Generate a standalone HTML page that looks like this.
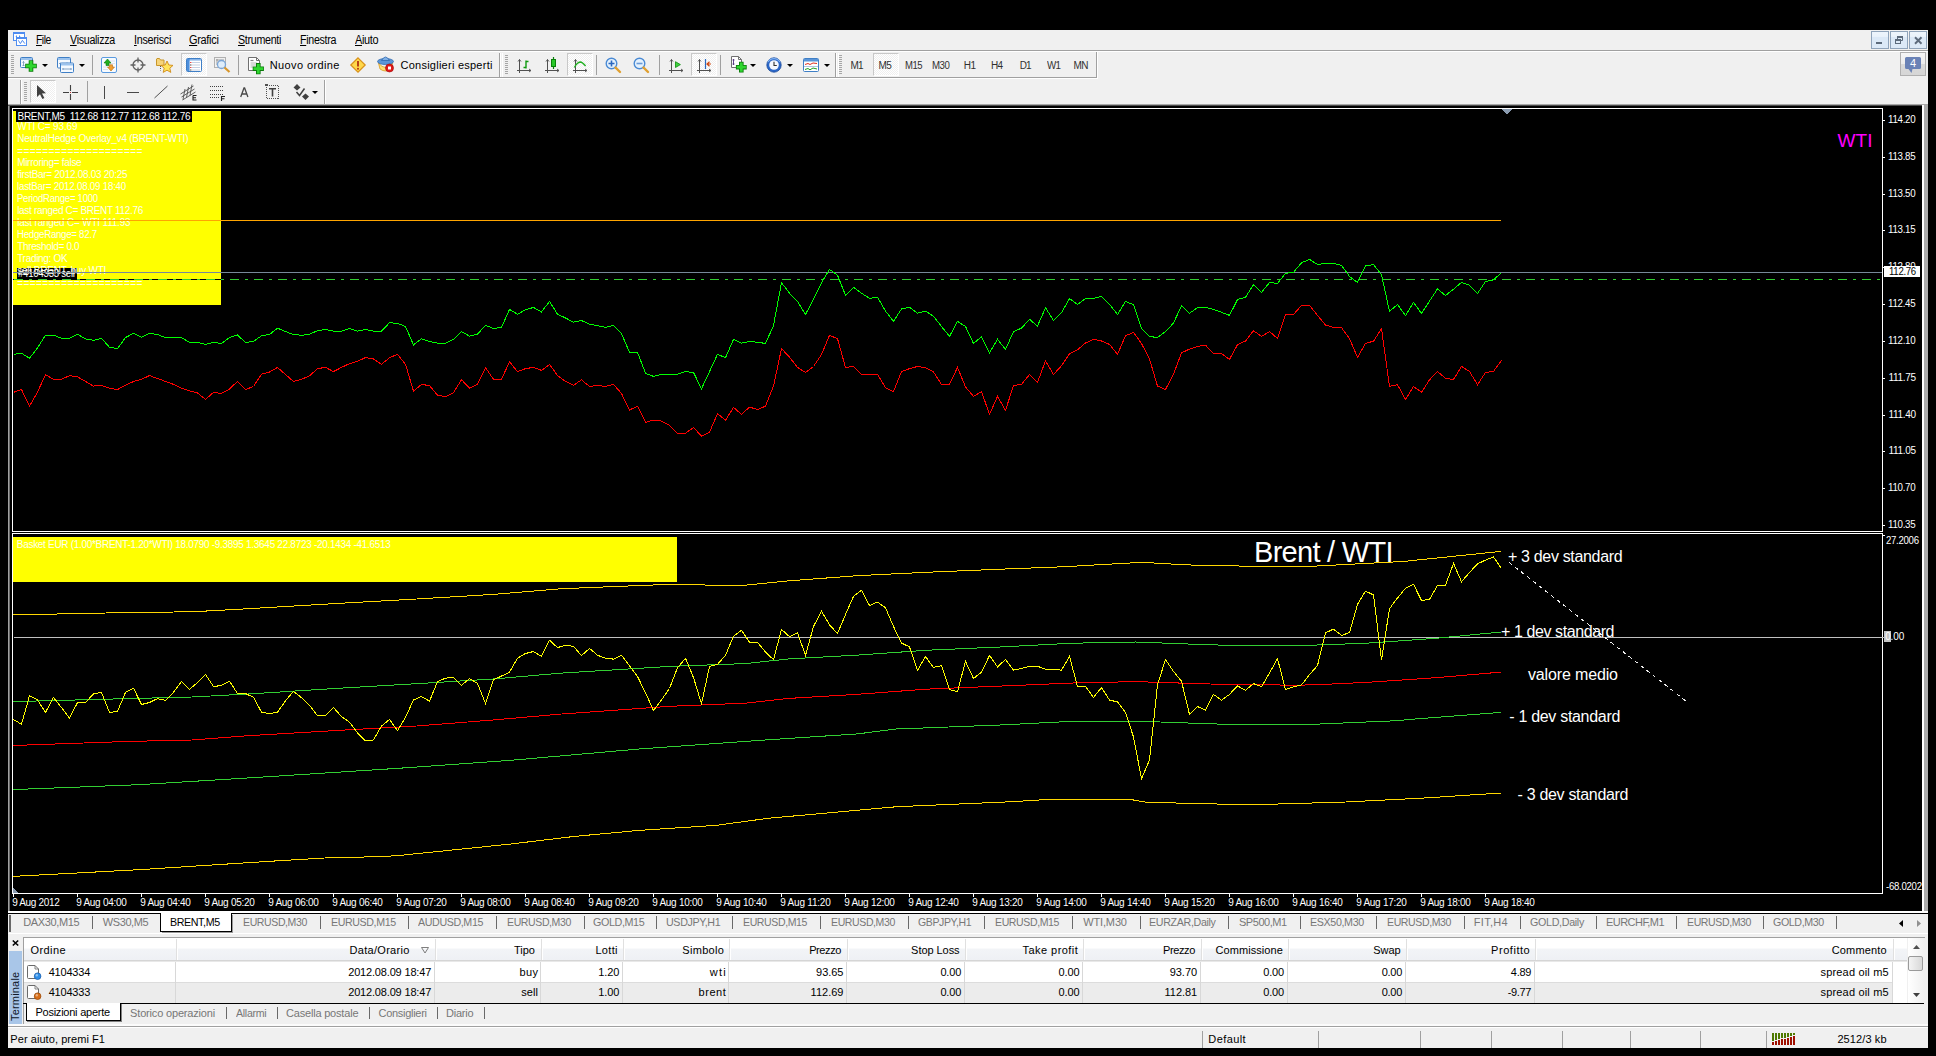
<!DOCTYPE html>
<html><head><meta charset="utf-8"><title>MetaTrader</title>
<style>
html,body{margin:0;padding:0;background:#000;}
body{width:1936px;height:1056px;position:relative;overflow:hidden;font-family:"Liberation Sans",sans-serif;}
.t{position:absolute;white-space:pre;font-family:"Liberation Sans",sans-serif;}
.b{position:absolute;}
svg{position:absolute;overflow:visible;}
u{text-decoration:underline;text-underline-offset:1px;}
</style></head><body>
<div class="b" style="left:8px;top:30px;width:1920px;height:1018px;background:#f0f0f0;"></div>
<div class="b" style="left:8px;top:104px;width:1920px;height:1px;background:#a8a8a8;"></div>
<div class="b" style="left:8px;top:105px;width:1920px;height:1px;background:#4a4a4a;"></div>
<div class="b" style="left:8px;top:106px;width:1px;height:805px;background:#a0a0a0;"></div>
<div class="b" style="left:9px;top:106px;width:1px;height:805px;background:#666666;"></div>
<div class="b" style="left:10px;top:106px;width:1912px;height:805px;background:#000;"></div>
<div class="b" style="left:1922px;top:105px;width:2px;height:807px;background:#ffffff;"></div>
<div class="b" style="left:1924px;top:105px;width:4px;height:807px;background:#ababab;"></div>
<div class="b" style="left:8px;top:911px;width:1920px;height:2px;background:#ffffff;"></div>
<div class="b" style="left:12px;top:108px;width:1871px;height:1px;background:#ffffff;"></div>
<div class="b" style="left:12px;top:531px;width:1871px;height:1px;background:#ffffff;"></div>
<div class="b" style="left:12px;top:533px;width:1871px;height:1px;background:#ffffff;"></div>
<div class="b" style="left:12px;top:893px;width:1871px;height:1px;background:#ffffff;"></div>
<div class="b" style="left:12px;top:108px;width:1px;height:424px;background:#ffffff;"></div>
<div class="b" style="left:1882px;top:108px;width:1px;height:424px;background:#ffffff;"></div>
<div class="b" style="left:12px;top:533px;width:1px;height:361px;background:#ffffff;"></div>
<div class="b" style="left:1882px;top:533px;width:1px;height:361px;background:#ffffff;"></div>
<div class="b" style="left:13px;top:111px;width:208px;height:194px;background:#ffff00;"></div>
<div class="b" style="left:13px;top:109px;width:208px;height:2px;background:#000;"></div>
<div class="b" style="left:16px;top:109px;width:176px;height:13px;background:#000;"></div>
<span class="t" style="left:17.50px;top:112.00px;font-size:10px;line-height:10px;color:#fff;letter-spacing:-0.270px;">BRENT,M5  112.68 112.77 112.68 112.76</span>
<div class="b" style="left:17px;top:268px;width:60px;height:11px;background:#000;"></div>
<span class="t" style="left:18.00px;top:269.00px;font-size:10px;line-height:10px;color:#fff;letter-spacing:-0.269px;transform:scaleX(0.965);transform-origin:0 0;">#4104333 sell</span>
<span class="t" style="left:17.20px;top:122.00px;font-size:10px;line-height:10px;color:#fffff0;letter-spacing:-0.152px;">WTI C= 93.69</span>
<span class="t" style="left:17.20px;top:134.00px;font-size:10px;line-height:10px;color:#fffff0;letter-spacing:-0.241px;">NeutralHedge Overlay_v4 (BRENT-WTI)</span>
<span class="t" style="left:17.20px;top:147.00px;font-size:10px;line-height:10px;color:#fffff0;letter-spacing:0.437px;">====================</span>
<span class="t" style="left:17.20px;top:158.00px;font-size:10px;line-height:10px;color:#fffff0;letter-spacing:-0.313px;">Mirroring= false</span>
<span class="t" style="left:17.20px;top:170.00px;font-size:10px;line-height:10px;color:#fffff0;letter-spacing:-0.314px;">firstBar= 2012.08.03 20:25</span>
<span class="t" style="left:17.20px;top:182.00px;font-size:10px;line-height:10px;color:#fffff0;letter-spacing:-0.250px;transform:scaleX(0.979);transform-origin:0 0;">lastBar= 2012.08.09 18:40</span>
<span class="t" style="left:17.20px;top:194.00px;font-size:10px;line-height:10px;color:#fffff0;letter-spacing:-0.291px;transform:scaleX(0.959);transform-origin:0 0;">PeriodRange= 1000</span>
<span class="t" style="left:17.20px;top:206.00px;font-size:10px;line-height:10px;color:#fffff0;letter-spacing:-0.320px;">last ranged C= BRENT 112.76</span>
<span class="t" style="left:17.20px;top:218.00px;font-size:10px;line-height:10px;color:#fffff0;letter-spacing:-0.204px;">last ranged C= WTI 111.93</span>
<span class="t" style="left:17.20px;top:230.00px;font-size:10px;line-height:10px;color:#fffff0;letter-spacing:-0.299px;transform:scaleX(0.971);transform-origin:0 0;">HedgeRange= 82.7</span>
<span class="t" style="left:17.20px;top:242.00px;font-size:10px;line-height:10px;color:#fffff0;letter-spacing:-0.353px;">Threshold= 0.0</span>
<span class="t" style="left:17.20px;top:254.00px;font-size:10px;line-height:10px;color:#fffff0;letter-spacing:-0.304px;">Trading: OK</span>
<span class="t" style="left:17.20px;top:266.00px;font-size:10px;line-height:10px;color:#fffff0;letter-spacing:-0.236px;">sell BRENT, buy WTI</span>
<span class="t" style="left:17.20px;top:279.00px;font-size:10px;line-height:10px;color:#fffff0;letter-spacing:0.437px;">====================</span>
<div class="b" style="left:13px;top:537px;width:664px;height:45px;background:#ffff00;"></div>
<span class="t" style="left:16.80px;top:540.00px;font-size:10px;line-height:10px;color:#fffff0;letter-spacing:-0.300px;">Basket EUR (1.00*BRENT-1.20*WTI) 18.0790 -9.3895 1.3645 22.8723 -20.1434 -41.6513</span>
<div class="b" style="left:1883px;top:120px;width:2px;height:1px;background:#ffffff;"></div>
<span class="t" style="left:1888.40px;top:115.00px;font-size:10px;line-height:10px;color:#fff;letter-spacing:-0.306px;transform:scaleX(0.975);transform-origin:0 0;">114.20</span>
<div class="b" style="left:1883px;top:157px;width:2px;height:1px;background:#ffffff;"></div>
<span class="t" style="left:1888.40px;top:152.00px;font-size:10px;line-height:10px;color:#fff;letter-spacing:-0.306px;transform:scaleX(0.975);transform-origin:0 0;">113.85</span>
<div class="b" style="left:1883px;top:194px;width:2px;height:1px;background:#ffffff;"></div>
<span class="t" style="left:1888.40px;top:189.00px;font-size:10px;line-height:10px;color:#fff;letter-spacing:-0.306px;transform:scaleX(0.975);transform-origin:0 0;">113.50</span>
<div class="b" style="left:1883px;top:230px;width:2px;height:1px;background:#ffffff;"></div>
<span class="t" style="left:1888.40px;top:225.00px;font-size:10px;line-height:10px;color:#fff;letter-spacing:-0.306px;transform:scaleX(0.975);transform-origin:0 0;">113.15</span>
<div class="b" style="left:1883px;top:267px;width:2px;height:1px;background:#ffffff;"></div>
<span class="t" style="left:1888.40px;top:262.00px;font-size:10px;line-height:10px;color:#fff;letter-spacing:-0.306px;transform:scaleX(0.975);transform-origin:0 0;">112.80</span>
<div class="b" style="left:1883px;top:304px;width:2px;height:1px;background:#ffffff;"></div>
<span class="t" style="left:1888.40px;top:299.00px;font-size:10px;line-height:10px;color:#fff;letter-spacing:-0.306px;transform:scaleX(0.975);transform-origin:0 0;">112.45</span>
<div class="b" style="left:1883px;top:341px;width:2px;height:1px;background:#ffffff;"></div>
<span class="t" style="left:1888.40px;top:336.00px;font-size:10px;line-height:10px;color:#fff;letter-spacing:-0.306px;transform:scaleX(0.975);transform-origin:0 0;">112.10</span>
<div class="b" style="left:1883px;top:378px;width:2px;height:1px;background:#ffffff;"></div>
<span class="t" style="left:1888.40px;top:373.00px;font-size:10px;line-height:10px;color:#fff;letter-spacing:-0.300px;">111.75</span>
<div class="b" style="left:1883px;top:415px;width:2px;height:1px;background:#ffffff;"></div>
<span class="t" style="left:1888.40px;top:410.00px;font-size:10px;line-height:10px;color:#fff;letter-spacing:-0.300px;">111.40</span>
<div class="b" style="left:1883px;top:451px;width:2px;height:1px;background:#ffffff;"></div>
<span class="t" style="left:1888.40px;top:446.00px;font-size:10px;line-height:10px;color:#fff;letter-spacing:-0.300px;">111.05</span>
<div class="b" style="left:1883px;top:488px;width:2px;height:1px;background:#ffffff;"></div>
<span class="t" style="left:1888.40px;top:483.00px;font-size:10px;line-height:10px;color:#fff;letter-spacing:-0.306px;transform:scaleX(0.975);transform-origin:0 0;">110.70</span>
<div class="b" style="left:1883px;top:525px;width:2px;height:1px;background:#ffffff;"></div>
<span class="t" style="left:1888.40px;top:520.00px;font-size:10px;line-height:10px;color:#fff;letter-spacing:-0.306px;transform:scaleX(0.975);transform-origin:0 0;">110.35</span>
<div class="b" style="left:1884px;top:266px;width:36px;height:11px;background:#fff;"></div>
<span class="t" style="left:1888.60px;top:267.00px;font-size:10px;line-height:10px;color:#000;letter-spacing:-0.310px;transform:scaleX(0.961);transform-origin:0 0;">112.76</span>
<div class="b" style="left:1883px;top:535px;width:2px;height:1px;background:#ffffff;"></div>
<span class="t" style="left:1886.00px;top:536.00px;font-size:10px;line-height:10px;color:#fff;letter-spacing:-0.313px;transform:scaleX(0.963);transform-origin:0 0;">27.2006</span>
<div class="b" style="left:1884px;top:631px;width:7px;height:11px;background:#c4c4c4;"></div>
<span class="t" style="left:1885.20px;top:632.00px;font-size:10px;line-height:10px;color:#fff;letter-spacing:-0.154px;">0.00</span>
<span class="t" style="left:1885.50px;top:882.00px;font-size:10px;line-height:10px;color:#fff;letter-spacing:-0.293px;transform:scaleX(0.962);transform-origin:0 0;">-68.0202</span>
<div class="b" style="left:13px;top:894px;width:1px;height:3px;background:#ffffff;"></div>
<span class="t" style="left:12.20px;top:898.00px;font-size:10px;line-height:10px;color:#fff;letter-spacing:-0.345px;">9 Aug 2012</span>
<div class="b" style="left:77px;top:894px;width:1px;height:3px;background:#ffffff;"></div>
<span class="t" style="left:76.20px;top:898.00px;font-size:10px;line-height:10px;color:#fff;letter-spacing:-0.278px;">9 Aug 04:00</span>
<div class="b" style="left:141px;top:894px;width:1px;height:3px;background:#ffffff;"></div>
<span class="t" style="left:140.20px;top:898.00px;font-size:10px;line-height:10px;color:#fff;letter-spacing:-0.278px;">9 Aug 04:40</span>
<div class="b" style="left:205px;top:894px;width:1px;height:3px;background:#ffffff;"></div>
<span class="t" style="left:204.20px;top:898.00px;font-size:10px;line-height:10px;color:#fff;letter-spacing:-0.278px;">9 Aug 05:20</span>
<div class="b" style="left:269px;top:894px;width:1px;height:3px;background:#ffffff;"></div>
<span class="t" style="left:268.20px;top:898.00px;font-size:10px;line-height:10px;color:#fff;letter-spacing:-0.278px;">9 Aug 06:00</span>
<div class="b" style="left:333px;top:894px;width:1px;height:3px;background:#ffffff;"></div>
<span class="t" style="left:332.20px;top:898.00px;font-size:10px;line-height:10px;color:#fff;letter-spacing:-0.278px;">9 Aug 06:40</span>
<div class="b" style="left:397px;top:894px;width:1px;height:3px;background:#ffffff;"></div>
<span class="t" style="left:396.20px;top:898.00px;font-size:10px;line-height:10px;color:#fff;letter-spacing:-0.278px;">9 Aug 07:20</span>
<div class="b" style="left:461px;top:894px;width:1px;height:3px;background:#ffffff;"></div>
<span class="t" style="left:460.20px;top:898.00px;font-size:10px;line-height:10px;color:#fff;letter-spacing:-0.278px;">9 Aug 08:00</span>
<div class="b" style="left:525px;top:894px;width:1px;height:3px;background:#ffffff;"></div>
<span class="t" style="left:524.20px;top:898.00px;font-size:10px;line-height:10px;color:#fff;letter-spacing:-0.278px;">9 Aug 08:40</span>
<div class="b" style="left:589px;top:894px;width:1px;height:3px;background:#ffffff;"></div>
<span class="t" style="left:588.20px;top:898.00px;font-size:10px;line-height:10px;color:#fff;letter-spacing:-0.278px;">9 Aug 09:20</span>
<div class="b" style="left:653px;top:894px;width:1px;height:3px;background:#ffffff;"></div>
<span class="t" style="left:652.20px;top:898.00px;font-size:10px;line-height:10px;color:#fff;letter-spacing:-0.278px;">9 Aug 10:00</span>
<div class="b" style="left:717px;top:894px;width:1px;height:3px;background:#ffffff;"></div>
<span class="t" style="left:716.20px;top:898.00px;font-size:10px;line-height:10px;color:#fff;letter-spacing:-0.278px;">9 Aug 10:40</span>
<div class="b" style="left:781px;top:894px;width:1px;height:3px;background:#ffffff;"></div>
<span class="t" style="left:780.20px;top:898.00px;font-size:10px;line-height:10px;color:#fff;letter-spacing:-0.204px;">9 Aug 11:20</span>
<div class="b" style="left:845px;top:894px;width:1px;height:3px;background:#ffffff;"></div>
<span class="t" style="left:844.20px;top:898.00px;font-size:10px;line-height:10px;color:#fff;letter-spacing:-0.278px;">9 Aug 12:00</span>
<div class="b" style="left:909px;top:894px;width:1px;height:3px;background:#ffffff;"></div>
<span class="t" style="left:908.20px;top:898.00px;font-size:10px;line-height:10px;color:#fff;letter-spacing:-0.278px;">9 Aug 12:40</span>
<div class="b" style="left:973px;top:894px;width:1px;height:3px;background:#ffffff;"></div>
<span class="t" style="left:972.20px;top:898.00px;font-size:10px;line-height:10px;color:#fff;letter-spacing:-0.278px;">9 Aug 13:20</span>
<div class="b" style="left:1037px;top:894px;width:1px;height:3px;background:#ffffff;"></div>
<span class="t" style="left:1036.20px;top:898.00px;font-size:10px;line-height:10px;color:#fff;letter-spacing:-0.278px;">9 Aug 14:00</span>
<div class="b" style="left:1101px;top:894px;width:1px;height:3px;background:#ffffff;"></div>
<span class="t" style="left:1100.20px;top:898.00px;font-size:10px;line-height:10px;color:#fff;letter-spacing:-0.278px;">9 Aug 14:40</span>
<div class="b" style="left:1165px;top:894px;width:1px;height:3px;background:#ffffff;"></div>
<span class="t" style="left:1164.20px;top:898.00px;font-size:10px;line-height:10px;color:#fff;letter-spacing:-0.278px;">9 Aug 15:20</span>
<div class="b" style="left:1229px;top:894px;width:1px;height:3px;background:#ffffff;"></div>
<span class="t" style="left:1228.20px;top:898.00px;font-size:10px;line-height:10px;color:#fff;letter-spacing:-0.278px;">9 Aug 16:00</span>
<div class="b" style="left:1293px;top:894px;width:1px;height:3px;background:#ffffff;"></div>
<span class="t" style="left:1292.20px;top:898.00px;font-size:10px;line-height:10px;color:#fff;letter-spacing:-0.278px;">9 Aug 16:40</span>
<div class="b" style="left:1357px;top:894px;width:1px;height:3px;background:#ffffff;"></div>
<span class="t" style="left:1356.20px;top:898.00px;font-size:10px;line-height:10px;color:#fff;letter-spacing:-0.278px;">9 Aug 17:20</span>
<div class="b" style="left:1421px;top:894px;width:1px;height:3px;background:#ffffff;"></div>
<span class="t" style="left:1420.20px;top:898.00px;font-size:10px;line-height:10px;color:#fff;letter-spacing:-0.278px;">9 Aug 18:00</span>
<div class="b" style="left:1485px;top:894px;width:1px;height:3px;background:#ffffff;"></div>
<span class="t" style="left:1484.20px;top:898.00px;font-size:10px;line-height:10px;color:#fff;letter-spacing:-0.278px;">9 Aug 18:40</span>
<svg width="1936" height="1056" viewBox="0 0 1936 1056" style="left:0;top:0" shape-rendering="crispEdges">
<line x1="13" y1="220.5" x2="1501" y2="220.5" stroke="#ffa500" stroke-width="1"/>
<line x1="13" y1="272.5" x2="1882" y2="272.5" stroke="#778899" stroke-width="1"/>
<line x1="13" y1="279.5" x2="221" y2="279.5" stroke="#000" stroke-width="1"/>
<line x1="14" y1="279.5" x2="1882" y2="279.5" stroke="#32cd32" stroke-width="1" stroke-dasharray="9 6 3 6"/>
<polyline points="13.5,354.3 21.5,353.2 29.5,358.3 37.5,347.8 45.5,335.3 53.5,335.2 61.5,338.2 69.5,338.2 77.5,334.3 85.5,338.9 93.5,340.3 101.5,338.4 109.5,347.3 117.5,348.5 125.5,337.6 133.5,333.3 141.5,337.2 149.5,333.3 157.5,334.5 165.5,337.6 173.5,337.6 181.5,337.6 189.5,342.3 197.5,342.5 205.5,344.4 213.5,342.5 221.5,343.5 229.5,337.6 237.5,335.0 245.5,342.5 253.5,341.3 261.5,335.8 269.5,334.5 277.5,328.2 285.5,331.6 293.5,334.5 301.5,335.3 309.5,334.3 317.5,330.7 325.5,329.4 333.5,331.2 341.5,331.2 349.5,328.5 357.5,331.2 365.5,329.5 373.5,331.2 381.5,331.2 389.5,322.7 397.5,323.4 405.5,326.5 413.5,344.9 421.5,338.7 429.5,341.5 437.5,343.2 445.5,343.2 453.5,339.3 461.5,331.6 469.5,336.2 477.5,334.1 485.5,325.3 493.5,328.5 501.5,327.3 509.5,309.4 517.5,314.2 525.5,309.8 533.5,307.4 541.5,312.0 549.5,301.4 557.5,314.2 565.5,318.0 573.5,322.2 581.5,320.5 589.5,324.3 597.5,325.6 605.5,327.3 613.5,325.3 621.5,333.6 629.5,352.4 637.5,352.4 645.5,373.3 653.5,376.4 661.5,374.5 669.5,374.5 677.5,374.2 685.5,371.6 693.5,372.5 701.5,388.7 709.5,371.6 717.5,354.3 725.5,357.7 733.5,339.3 741.5,343.2 749.5,341.5 757.5,342.2 765.5,343.5 773.5,325.6 781.5,282.7 789.5,293.2 797.5,301.4 805.5,314.5 813.5,299.2 821.5,282.7 829.5,269.4 837.5,275.3 845.5,295.3 853.5,287.3 861.5,293.2 869.5,298.4 877.5,297.2 885.5,311.1 893.5,321.4 901.5,308.9 909.5,307.2 917.5,313.2 925.5,311.1 933.5,316.2 941.5,326.5 949.5,336.4 957.5,321.4 965.5,326.5 973.5,343.5 981.5,336.7 989.5,352.6 997.5,339.3 1005.5,349.5 1013.5,331.6 1021.5,328.2 1029.5,319.3 1037.5,326.1 1045.5,307.7 1053.5,320.5 1061.5,312.8 1069.5,298.7 1077.5,304.3 1085.5,298.7 1093.5,298.4 1101.5,296.3 1109.5,304.3 1117.5,314.5 1125.5,301.4 1133.5,304.7 1141.5,328.2 1149.5,336.4 1157.5,337.6 1165.5,331.6 1173.5,323.1 1181.5,305.7 1189.5,313.3 1197.5,307.7 1205.5,307.4 1213.5,309.4 1221.5,312.3 1229.5,315.4 1237.5,299.5 1245.5,297.2 1253.5,284.7 1261.5,292.4 1269.5,282.5 1277.5,283.4 1285.5,273.3 1293.5,272.3 1301.5,262.8 1309.5,259.4 1317.5,264.5 1325.5,263.3 1333.5,263.3 1341.5,265.3 1349.5,276.4 1357.5,282.4 1365.5,265.9 1373.5,264.5 1381.5,274.7 1389.5,311.4 1397.5,304.5 1405.5,315.6 1413.5,302.5 1421.5,313.4 1429.5,301.1 1437.5,288.9 1445.5,295.5 1453.5,289.2 1461.5,282.4 1469.5,285.3 1477.5,293.5 1485.5,281.5 1493.5,279.8 1501.5,272.7" fill="none" stroke="#00ff00" stroke-width="1" />
<polyline points="13.5,392.4 21.5,389.5 29.5,406.2 37.5,392.1 45.5,374.7 53.5,379.3 61.5,379.3 69.5,375.6 77.5,376.8 85.5,381.5 93.5,386.1 101.5,385.3 109.5,388.3 117.5,389.5 125.5,385.3 133.5,381.5 141.5,379.3 149.5,375.6 157.5,378.5 165.5,381.4 173.5,384.4 181.5,388.2 189.5,390.9 197.5,392.9 205.5,399.4 213.5,392.4 221.5,393.5 229.5,389.0 237.5,381.4 245.5,389.5 253.5,386.5 261.5,374.2 269.5,372.0 277.5,367.4 285.5,374.5 293.5,381.5 301.5,379.3 309.5,375.9 317.5,368.6 325.5,367.4 333.5,371.6 341.5,367.4 349.5,363.6 357.5,361.4 365.5,357.5 373.5,358.9 381.5,364.3 389.5,357.7 397.5,354.3 405.5,364.3 413.5,391.2 421.5,384.4 429.5,385.6 437.5,395.2 445.5,396.7 453.5,392.6 461.5,379.7 469.5,388.2 477.5,384.1 485.5,367.7 493.5,379.3 501.5,379.3 509.5,361.8 517.5,371.6 525.5,368.6 533.5,367.4 541.5,370.4 549.5,364.5 557.5,375.4 565.5,381.4 573.5,385.3 581.5,379.8 589.5,386.5 597.5,385.3 605.5,386.5 613.5,384.4 621.5,393.5 629.5,410.0 637.5,406.2 645.5,422.3 653.5,420.2 661.5,421.1 669.5,425.3 677.5,433.3 685.5,433.3 693.5,427.5 701.5,436.1 709.5,432.1 717.5,413.7 725.5,420.2 733.5,407.4 741.5,414.3 749.5,407.1 757.5,409.5 765.5,406.2 773.5,386.1 781.5,348.6 789.5,357.2 797.5,367.4 805.5,372.5 813.5,366.5 821.5,354.6 829.5,335.3 837.5,338.7 845.5,367.4 853.5,366.5 861.5,374.2 869.5,374.2 877.5,374.2 885.5,387.8 893.5,391.6 901.5,371.6 909.5,368.6 917.5,366.5 925.5,367.7 933.5,372.0 941.5,384.4 949.5,384.4 957.5,367.4 965.5,387.0 973.5,396.4 981.5,391.6 989.5,414.3 997.5,396.4 1005.5,410.3 1013.5,385.6 1021.5,384.4 1029.5,374.5 1037.5,382.4 1045.5,360.9 1053.5,374.5 1061.5,365.7 1069.5,353.7 1077.5,349.8 1085.5,343.0 1093.5,339.3 1101.5,341.0 1109.5,344.4 1117.5,354.3 1125.5,335.8 1133.5,332.4 1141.5,343.5 1149.5,358.9 1157.5,386.1 1165.5,389.5 1173.5,374.2 1181.5,352.9 1189.5,349.1 1197.5,346.4 1205.5,345.2 1213.5,353.2 1221.5,353.4 1229.5,359.4 1237.5,344.7 1245.5,341.0 1253.5,330.7 1261.5,336.4 1269.5,331.6 1277.5,338.4 1285.5,314.5 1293.5,314.5 1301.5,305.4 1309.5,305.4 1317.5,315.3 1325.5,325.0 1333.5,327.6 1341.5,327.6 1349.5,338.6 1357.5,357.4 1365.5,343.4 1373.5,341.2 1381.5,328.7 1389.5,386.4 1397.5,384.7 1405.5,399.5 1413.5,386.4 1421.5,392.3 1429.5,379.9 1437.5,371.5 1445.5,378.2 1453.5,379.5 1461.5,366.4 1469.5,371.5 1477.5,384.7 1485.5,372.4 1493.5,371.4 1501.5,360.4" fill="none" stroke="#ff0000" stroke-width="1" />
<line x1="14" y1="637.5" x2="1884" y2="637.5" stroke="#c0c0c0" stroke-width="1"/>
<polyline points="13.0,614.7 64.5,613.9 129.0,612.5 192.0,611.8 248.6,608.7 340.0,603.3 416.7,599.0 493.4,594.4 561.6,588.7 670.0,584.3 714.0,585.2 745.0,585.2 789.0,580.8 857.5,575.7 925.7,572.3 1000.0,569.2 1064.6,566.7 1142.0,562.3 1186.0,564.9 1258.0,566.4 1300.0,566.9 1387.0,562.3 1402.0,561.6 1501.0,551.4" fill="none" stroke="#ffd700" stroke-width="1" />
<polyline points="13.0,876.4 139.0,869.7 268.0,861.4 333.0,857.5 376.7,856.8 397.0,855.7 510.0,844.1 574.6,836.4 639.0,830.4 716.6,825.3 768.0,818.3 897.0,806.7 1010.0,801.8 1048.7,799.4 1128.8,799.2 1146.9,802.3 1229.5,804.3 1268.0,804.3 1345.7,802.0 1423.0,798.1 1501.0,793.0" fill="none" stroke="#ffd700" stroke-width="1" />
<polyline points="13.0,701.6 129.0,698.6 192.0,697.0 248.0,694.0 340.0,688.2 416.7,683.7 493.0,679.0 561.6,673.1 670.0,666.4 745.0,663.6 789.0,658.9 857.5,655.1 925.7,650.3 1000.0,647.0 1073.0,643.2 1136.0,642.0 1187.5,644.0 1226.7,645.3 1300.0,645.5 1330.0,644.6 1368.0,643.1 1436.0,638.3 1501.0,632.0" fill="none" stroke="#32cd32" stroke-width="1" />
<polyline points="13.0,789.6 139.0,784.7 268.0,776.7 397.0,768.4 510.0,760.4 639.0,749.0 768.0,739.8 857.5,733.9 897.0,728.9 925.7,727.9 1000.0,725.0 1073.0,721.3 1113.0,721.4 1136.0,721.1 1187.5,723.0 1216.6,724.0 1320.0,724.0 1397.0,720.7 1409.0,719.5 1501.0,712.4" fill="none" stroke="#32cd32" stroke-width="1" />
<polyline points="13.0,745.5 129.0,741.4 192.0,740.0 248.0,735.7 340.0,730.3 416.7,726.0 493.0,720.0 561.6,714.0 670.0,706.3 745.0,703.2 789.0,698.4 857.5,694.3 925.7,689.2 1000.0,686.1 1073.0,683.0 1136.0,681.6 1187.5,683.3 1226.7,684.5 1300.0,685.2 1330.0,684.1 1368.0,682.3 1436.0,677.7 1501.0,672.1" fill="none" stroke="#ff0000" stroke-width="1" />
<polyline points="13.5,719.5 21.5,724.3 29.5,695.7 37.5,699.9 45.5,712.4 53.5,697.4 61.5,707.6 69.5,718.2 77.5,702.5 85.5,702.5 93.5,694.0 101.5,692.3 109.5,712.4 117.5,711.4 125.5,692.3 133.5,688.3 141.5,704.5 149.5,702.5 157.5,698.6 165.5,700.4 173.5,692.3 181.5,681.5 189.5,689.4 197.5,682.6 205.5,674.4 213.5,686.6 221.5,685.4 229.5,681.2 237.5,693.5 245.5,693.5 253.5,697.4 261.5,712.2 269.5,713.6 277.5,712.2 285.5,700.8 293.5,691.4 301.5,697.7 309.5,705.4 317.5,715.6 325.5,715.6 333.5,707.6 341.5,716.6 349.5,722.2 357.5,732.8 365.5,741.0 373.5,739.9 381.5,726.0 389.5,719.5 397.5,730.6 405.5,717.4 413.5,699.9 421.5,696.5 429.5,701.2 437.5,681.6 445.5,678.2 453.5,677.4 461.5,685.4 469.5,678.6 477.5,683.3 485.5,703.5 493.5,679.9 501.5,676.0 509.5,672.3 517.5,658.1 525.5,653.5 533.5,651.5 541.5,656.4 549.5,640.2 557.5,647.6 565.5,645.3 573.5,646.4 581.5,655.6 589.5,648.4 597.5,655.2 605.5,658.3 613.5,659.1 621.5,655.2 629.5,665.8 637.5,676.5 645.5,692.7 653.5,710.6 661.5,699.9 669.5,688.5 677.5,667.7 685.5,658.3 693.5,677.6 701.5,703.7 709.5,666.5 717.5,664.3 725.5,655.4 733.5,636.2 741.5,630.2 749.5,642.3 757.5,642.3 765.5,652.0 773.5,659.7 781.5,629.4 789.5,636.7 797.5,632.8 805.5,655.4 813.5,626.5 821.5,611.1 829.5,624.8 837.5,633.6 845.5,614.5 853.5,596.3 861.5,590.3 869.5,605.5 877.5,602.1 885.5,607.7 893.5,626.5 901.5,643.0 909.5,646.9 917.5,670.4 925.5,656.6 933.5,667.4 941.5,665.7 949.5,689.5 957.5,691.6 965.5,661.4 973.5,678.5 981.5,672.2 989.5,655.4 997.5,666.9 1005.5,659.4 1013.5,670.2 1021.5,668.5 1029.5,666.2 1037.5,666.2 1045.5,669.3 1053.5,669.1 1061.5,670.2 1069.5,656.4 1077.5,686.4 1085.5,686.4 1093.5,697.4 1101.5,687.6 1109.5,700.0 1117.5,702.0 1125.5,712.3 1133.5,737.0 1141.5,778.7 1149.5,760.0 1157.5,685.0 1165.5,659.4 1173.5,671.4 1181.5,681.2 1189.5,714.5 1197.5,706.6 1205.5,710.1 1213.5,694.4 1221.5,700.3 1229.5,694.4 1237.5,685.8 1245.5,690.4 1253.5,683.6 1261.5,686.7 1269.5,673.1 1277.5,658.6 1285.5,689.6 1293.5,686.7 1301.5,684.9 1309.5,674.7 1317.5,665.6 1325.5,632.9 1333.5,629.1 1341.5,635.4 1349.5,632.6 1357.5,604.4 1365.5,591.1 1373.5,594.9 1381.5,659.8 1389.5,608.7 1397.5,598.0 1405.5,588.2 1413.5,584.3 1421.5,600.5 1429.5,599.3 1437.5,585.5 1445.5,585.2 1453.5,563.4 1461.5,581.8 1469.5,572.4 1477.5,563.9 1485.5,560.1 1493.5,557.0 1501.5,568.5" fill="none" stroke="#ffff00" stroke-width="1" />
<line x1="1509" y1="562.3" x2="1687" y2="701.9" stroke="#f0f0f0" stroke-width="1" stroke-dasharray="3.8 3.8"/>
<polygon points="1501,109 1512,109 1506.5,114.5" fill="#8a9bb0"/>
<polygon points="13,888 13,893 18,893" fill="#8a9bb0"/>
</svg>
<span class="t" style="left:1837.50px;top:131.00px;font-size:19px;line-height:19px;color:#ff00ff;letter-spacing:0.090px;">WTI</span>
<span class="t" style="left:1254.00px;top:538.00px;font-size:29px;line-height:29px;color:#fff;letter-spacing:-0.713px;">Brent / WTI</span>
<span class="t" style="left:1508.00px;top:549.00px;font-size:16px;line-height:16px;color:#fff;letter-spacing:-0.336px;">+ 3 dev standard</span>
<span class="t" style="left:1501.00px;top:624.00px;font-size:16px;line-height:16px;color:#fff;letter-spacing:-0.409px;">+ 1 dev standard</span>
<span class="t" style="left:1528.00px;top:667.00px;font-size:16px;line-height:16px;color:#fff;letter-spacing:-0.146px;">valore medio</span>
<span class="t" style="left:1509.30px;top:709.00px;font-size:16px;line-height:16px;color:#fff;letter-spacing:-0.308px;">- 1 dev standard</span>
<span class="t" style="left:1517.50px;top:787.00px;font-size:16px;line-height:16px;color:#fff;letter-spacing:-0.308px;">- 3 dev standard</span>
<div class="b" style="left:8px;top:50px;width:1920px;height:1px;background:#a0a0a0;"></div>
<div class="b" style="left:8px;top:51px;width:1920px;height:1px;background:#ffffff;"></div>
<div class="b" style="left:8px;top:77px;width:1089px;height:1px;background:#a0a0a0;"></div>
<div class="b" style="left:8px;top:78px;width:1090px;height:1px;background:#ffffff;"></div>
<span class="t" style="left:35.90px;top:34.00px;font-size:12px;line-height:12px;color:#000;letter-spacing:-0.515px;transform:scaleX(0.860);transform-origin:0 0;"><u>F</u>ile</span>
<span class="t" style="left:69.80px;top:34.00px;font-size:12px;line-height:12px;color:#000;letter-spacing:-0.336px;transform:scaleX(0.890);transform-origin:0 0;"><u>V</u>isualizza</span>
<span class="t" style="left:133.90px;top:34.00px;font-size:12px;line-height:12px;color:#000;letter-spacing:-0.306px;transform:scaleX(0.898);transform-origin:0 0;"><u>I</u>nserisci</span>
<span class="t" style="left:189.40px;top:34.00px;font-size:12px;line-height:12px;color:#000;letter-spacing:-0.318px;transform:scaleX(0.910);transform-origin:0 0;"><u>G</u>rafici</span>
<span class="t" style="left:238.00px;top:34.00px;font-size:12px;line-height:12px;color:#000;letter-spacing:-0.359px;transform:scaleX(0.893);transform-origin:0 0;"><u>S</u>trumenti</span>
<span class="t" style="left:299.80px;top:34.00px;font-size:12px;line-height:12px;color:#000;letter-spacing:-0.348px;transform:scaleX(0.890);transform-origin:0 0;"><u>F</u>inestra</span>
<span class="t" style="left:354.70px;top:34.00px;font-size:12px;line-height:12px;color:#000;letter-spacing:-0.376px;transform:scaleX(0.909);transform-origin:0 0;"><u>A</u>iuto</span>
<svg style="left:13px;top:32px" width="15" height="15" viewBox="0 0 15 15" ><rect x="0.5" y="0.5" width="11" height="8" fill="#ffffff" stroke="#4f8df0"/><rect x="0" y="0" width="12" height="2" fill="#4f8df0"/><path d="M2.5 4.5 L4 3 V6 Z M6 3 L7.5 4.5 L6 6 Z" fill="#4f8df0"/><rect x="3.5" y="5.5" width="10" height="8" fill="#ffffff" stroke="#4f8df0"/><rect x="3" y="5" width="11" height="2" fill="#4f8df0"/><path d="M5.3 8.3 L7.4 11.6 L9.4 8.3 L11.8 11.6" fill="none" stroke="#4f8df0" stroke-width="1"/></svg>
<div class="b" style="left:1871px;top:31px;width:18px;height:18px;background:#dce9f7;border:1px solid #8fa3ba;box-sizing:border-box;background:linear-gradient(#eef5fc 0%,#eaf2fb 28%,#dce9f7 30%,#dce9f7 100%);"></div>
<svg style="left:1871px;top:31px" width="18" height="18" viewBox="0 0 18 18" ><rect x="5" y="11" width="6" height="2" fill="#5d6b7c"/></svg>
<div class="b" style="left:1890px;top:31px;width:18px;height:18px;background:#dce9f7;border:1px solid #8fa3ba;box-sizing:border-box;background:linear-gradient(#eef5fc 0%,#eaf2fb 28%,#dce9f7 30%,#dce9f7 100%);"></div>
<svg style="left:1890px;top:31px" width="18" height="18" viewBox="0 0 18 18" ><path d="M7.5 8 V5.5 H12.5 V9.5 H11" fill="none" stroke="#5d6b7c"/><rect x="7" y="5" width="6" height="2" fill="#5d6b7c"/><rect x="5.5" y="8.5" width="5" height="4" fill="none" stroke="#5d6b7c"/><rect x="5" y="8" width="6" height="2" fill="#5d6b7c"/></svg>
<div class="b" style="left:1909px;top:31px;width:18px;height:18px;background:#dce9f7;border:1px solid #8fa3ba;box-sizing:border-box;background:linear-gradient(#eef5fc 0%,#eaf2fb 28%,#dce9f7 30%,#dce9f7 100%);"></div>
<svg style="left:1909px;top:31px" width="18" height="18" viewBox="0 0 18 18" ><path d="M6 6.3 L12.5 12.7 M12.5 6.3 L6 12.7" stroke="#5d6b7c" stroke-width="1.9"/></svg>
<div class="b" style="left:11px;top:55px;width:3px;height:1px;background:#a6a6a6;"></div>
<div class="b" style="left:11px;top:57px;width:3px;height:1px;background:#a6a6a6;"></div>
<div class="b" style="left:11px;top:59px;width:3px;height:1px;background:#a6a6a6;"></div>
<div class="b" style="left:11px;top:61px;width:3px;height:1px;background:#a6a6a6;"></div>
<div class="b" style="left:11px;top:63px;width:3px;height:1px;background:#a6a6a6;"></div>
<div class="b" style="left:11px;top:65px;width:3px;height:1px;background:#a6a6a6;"></div>
<div class="b" style="left:11px;top:67px;width:3px;height:1px;background:#a6a6a6;"></div>
<div class="b" style="left:11px;top:69px;width:3px;height:1px;background:#a6a6a6;"></div>
<div class="b" style="left:11px;top:71px;width:3px;height:1px;background:#a6a6a6;"></div>
<div class="b" style="left:11px;top:73px;width:3px;height:1px;background:#a6a6a6;"></div>
<svg style="left:20px;top:57px" width="18" height="16" viewBox="0 0 18 16" ><rect x="0.5" y="0.5" width="12" height="10" rx="1" fill="#f4f9ff" stroke="#3f7fc6"/><rect x="1" y="1" width="11" height="2" fill="#9cc3ee"/><path d="M3.5 4.5 V9 M2.5 5.5 L3.5 4.5 L4.5 5.5 M2.5 8 L3.5 9 L4.5 8" stroke="#6b8fb8" fill="none" stroke-width="0.8"/><path d="M11 3.2 V14.8 M5.2 9 H16.8" stroke="#0a7a0a" stroke-width="4.6"/><path d="M11 4.0 V14.0 M6.0 9 H16.0" stroke="#2fd62f" stroke-width="2.8"/></svg>
<svg style="left:42px;top:64px" width="6" height="3" viewBox="0 0 6 3" ><polygon points="0,0 6,0 3,3" fill="#000"/></svg>
<svg style="left:57px;top:57px" width="17" height="16" viewBox="0 0 17 16" ><rect x="0.5" y="0.5" width="13" height="10.5" rx="1" fill="#f4f9ff" stroke="#3f7fc6"/><rect x="1" y="1" width="12" height="2" fill="#9cc3ee"/><path d="M2.5 6.5 H11 M3.5 5.5 L2.5 6.5 L3.5 7.5 M10 5.5 L11 6.5 L10 7.5" stroke="#6b8fb8" fill="none" stroke-width="0.8"/><rect x="3.5" y="6" width="13" height="9.5" rx="1" fill="#f4f9ff" stroke="#3f7fc6"/><rect x="4" y="6.5" width="12" height="2" fill="#9cc3ee"/><path d="M5.5 12 H14.5 M6.5 11 L5.5 12 L6.5 13 M13.5 11 L14.5 12 L13.5 13" stroke="#6b8fb8" fill="none" stroke-width="0.8"/></svg>
<svg style="left:79px;top:64px" width="6" height="3" viewBox="0 0 6 3" ><polygon points="0,0 6,0 3,3" fill="#000"/></svg>
<div class="b" style="left:92px;top:55px;width:1px;height:20px;background:#a0a0a0;"></div>
<svg style="left:101px;top:57px" width="16" height="16" viewBox="0 0 16 16" ><rect x="0.5" y="0.5" width="15" height="15" rx="1.5" fill="#f7fbff" stroke="#5b9be0"/><path d="M9 4 H14 M9 6.5 H14 M2 10 H7 M2 12.5 H7" stroke="#d6dde6" stroke-width="0.8"/><path d="M6.5 2 L10 6 H8 V8.5 H5 V6 H3 Z" fill="#1fae1f" stroke="#0a7a0a" stroke-width="0.6"/><path d="M10 14 L6.5 10 H8.5 V7.8 H11.5 V10 H13.5 Z" fill="#f0a030" stroke="#b86a10" stroke-width="0.6"/></svg>
<svg style="left:130px;top:57px" width="16" height="16" viewBox="0 0 16 16" ><circle cx="8" cy="8" r="5" fill="none" stroke="#606060" stroke-width="1.3"/><path d="M8 0.5 V5.5 M8 10.5 V15.5 M0.5 8 H5.5 M10.5 8 H15.5" stroke="#606060" stroke-width="1.3"/></svg>
<svg style="left:156px;top:56px" width="18" height="18" viewBox="0 0 18 18" ><path d="M0.5 3 V9.5 H8 V4 H4.5 L3.5 2.5 H1 Z" fill="#f6d47a" stroke="#c8962a"/><path d="M4.5 10 V14.5" stroke="#555" stroke-dasharray="1 1"/><path d="M11 5 L12.8 9 L17 9.4 L13.8 12.2 L14.8 16.4 L11 14.2 L7.2 16.4 L8.2 12.2 L5 9.4 L9.2 9 Z" fill="#ffe45a" stroke="#d08a18" stroke-width="0.9"/></svg>
<div class="b" style="left:181px;top:53px;width:26px;height:23px;background:#f8f8f8;border:1px solid #c8c8c8;border-right-color:#fff;border-bottom-color:#fff;box-sizing:border-box;background-image:repeating-conic-gradient(#ffffff 0% 25%, #efefef 0% 50%);background-size:2px 2px;"></div>
<svg style="left:186px;top:57px" width="16" height="16" viewBox="0 0 16 16" ><rect x="0.5" y="1.5" width="15" height="13" rx="1" fill="#ffffff" stroke="#3f7fc6"/><rect x="1" y="2" width="14" height="1.6" fill="#8ab6ea"/><rect x="1" y="2" width="2.6" height="12" fill="#4d8fdc"/><path d="M6 5.5 H14 M6 8 H14 M6 10.5 H14 M6 13 H14" stroke="#b4c4da" stroke-width="0.8"/><path d="M4.2 5.5 H5.4 M4.2 10.5 H5.4" stroke="#e02020" stroke-width="1.2"/><path d="M4.2 8 H5.4 M4.2 13 H5.4" stroke="#202020" stroke-width="1.2"/></svg>
<svg style="left:214px;top:57px" width="16" height="16" viewBox="0 0 16 16" ><rect x="0.5" y="0.5" width="11" height="10" fill="#f0f0f0" stroke="#b0b0b0"/><path d="M2 3 H10 M3 2 V8" stroke="#8a8a8a" stroke-width="0.8"/><circle cx="7.5" cy="7.5" r="4" fill="#dcecfb" fill-opacity="0.85" stroke="#7aa5d6" stroke-width="1.3"/><path d="M10.5 10.5 L15.5 15" stroke="#d8962a" stroke-width="2.2"/></svg>
<div class="b" style="left:238px;top:55px;width:1px;height:20px;background:#a0a0a0;"></div>
<svg style="left:248px;top:57px" width="17" height="18" viewBox="0 0 17 18" ><path d="M0.5 0.5 H8.5 L11.5 3.5 V13.5 H0.5 Z" fill="#ffffff" stroke="#707070"/><path d="M8.5 0.5 V3.5 H11.5" fill="none" stroke="#707070"/><path d="M2.5 3.5 H5.5" stroke="#808080" stroke-width="1.2"/><path d="M2.5 6 H9 M2.5 8 H9 M2.5 10 H5" stroke="#a0a0a0" stroke-width="0.8"/><path d="M10.3 6.1 V17.299999999999997 M4.700000000000001 11.7 H15.9" stroke="#0a7a0a" stroke-width="4.6"/><path d="M10.3 6.8999999999999995 V16.499999999999996 M5.500000000000001 11.7 H15.1" stroke="#2fd62f" stroke-width="2.8"/></svg>
<span class="t" style="left:269.70px;top:60.00px;font-size:11px;line-height:11px;color:#000;letter-spacing:0.397px;">Nuovo ordine</span>
<svg style="left:350px;top:57px" width="16" height="16" viewBox="0 0 16 16" ><path d="M8 0.8 L15.2 8 L8 15.2 L0.8 8 Z" fill="#ffd84a" stroke="#d89018" stroke-width="1.2"/><path d="M8 4 V9.5" stroke="#b03010" stroke-width="1.8"/><circle cx="8" cy="11.8" r="1" fill="#b03010"/></svg>
<svg style="left:377px;top:56px" width="17" height="17" viewBox="0 0 17 17" ><path d="M1.5 7 Q8.5 16 15.5 7 L14 13 Q8.5 17 3 13 Z" fill="#ffe070" stroke="#d89a20" stroke-width="0.8"/><ellipse cx="8.5" cy="5.5" rx="8" ry="3" fill="#5b95d8" stroke="#2f68ae" stroke-width="0.8"/><path d="M4.5 4.5 Q8.5 -2.5 12.5 4.5 Z" fill="#7fb0e6" stroke="#2f68ae" stroke-width="0.8"/><circle cx="12.5" cy="12" r="4" fill="#e01818" stroke="#a00808" stroke-width="0.6"/><rect x="11" y="10.5" width="3" height="3" fill="#fff"/></svg>
<span class="t" style="left:400.50px;top:60.00px;font-size:11px;line-height:11px;color:#000;letter-spacing:0.248px;">Consiglieri esperti</span>
<div class="b" style="left:499px;top:53px;width:1px;height:24px;background:#a0a0a0;"></div>
<div class="b" style="left:500px;top:53px;width:1px;height:24px;background:#ffffff;"></div>
<div class="b" style="left:502px;top:53px;width:1px;height:24px;background:#fff;"></div>
<div class="b" style="left:505px;top:55px;width:3px;height:1px;background:#a6a6a6;"></div>
<div class="b" style="left:505px;top:57px;width:3px;height:1px;background:#a6a6a6;"></div>
<div class="b" style="left:505px;top:59px;width:3px;height:1px;background:#a6a6a6;"></div>
<div class="b" style="left:505px;top:61px;width:3px;height:1px;background:#a6a6a6;"></div>
<div class="b" style="left:505px;top:63px;width:3px;height:1px;background:#a6a6a6;"></div>
<div class="b" style="left:505px;top:65px;width:3px;height:1px;background:#a6a6a6;"></div>
<div class="b" style="left:505px;top:67px;width:3px;height:1px;background:#a6a6a6;"></div>
<div class="b" style="left:505px;top:69px;width:3px;height:1px;background:#a6a6a6;"></div>
<div class="b" style="left:505px;top:71px;width:3px;height:1px;background:#a6a6a6;"></div>
<div class="b" style="left:505px;top:73px;width:3px;height:1px;background:#a6a6a6;"></div>
<svg style="left:516px;top:57px" width="16" height="17" viewBox="0 0 16 17" ><path d="M3.5 2.5 V16 M1 13.5 H14.8" stroke="#505050" fill="none"/><path d="M2 4.5 L3.5 2.5 L5 4.5 M13 12 L15 13.5 L13 15" stroke="#505050" fill="none" stroke-width="0.9"/><path d="M10 3.5 V11.5 M10 4.5 H12.5 M10 10.5 H7.5" stroke="#109a10" stroke-width="1.4" fill="none"/></svg>
<svg style="left:544px;top:57px" width="16" height="17" viewBox="0 0 16 17" ><path d="M3.5 2.5 V16 M1 13.5 H14.8" stroke="#505050" fill="none"/><path d="M2 4.5 L3.5 2.5 L5 4.5 M13 12 L15 13.5 L13 15" stroke="#505050" fill="none" stroke-width="0.9"/><path d="M9.5 0 V12" stroke="#0a800a" stroke-width="1.2"/><rect x="7.5" y="2.5" width="4" height="7" fill="#28c828" stroke="#0a800a"/></svg>
<div class="b" style="left:567px;top:53px;width:26px;height:23px;background:#f8f8f8;border:1px solid #c8c8c8;border-right-color:#fff;border-bottom-color:#fff;box-sizing:border-box;background-image:repeating-conic-gradient(#ffffff 0% 25%, #efefef 0% 50%);background-size:2px 2px;"></div>
<svg style="left:572px;top:57px" width="16" height="17" viewBox="0 0 16 17" ><path d="M3.5 2.5 V16 M1 13.5 H14.8" stroke="#505050" fill="none"/><path d="M2 4.5 L3.5 2.5 L5 4.5 M13 12 L15 13.5 L13 15" stroke="#505050" fill="none" stroke-width="0.9"/><path d="M2.3 10.5 Q5 5.5 8.2 5 Q10.5 5.2 13.6 9" stroke="#22b022" stroke-width="1.3" fill="none"/></svg>
<div class="b" style="left:596px;top:55px;width:1px;height:20px;background:#a0a0a0;"></div>
<svg style="left:605px;top:57px" width="16" height="16" viewBox="0 0 16 16" ><circle cx="6.5" cy="6.5" r="5.3" fill="#e4f1fd" stroke="#4a8ad4" stroke-width="1.4"/><path d="M3.5 6.5 H9.5 M6.5 3.5 V9.5" stroke="#2a68c0" stroke-width="1.6"/><path d="M10.5 10.5 L15 15" stroke="#e0a030" stroke-width="2.4" stroke-linecap="round"/></svg>
<svg style="left:633px;top:57px" width="16" height="16" viewBox="0 0 16 16" ><circle cx="6.5" cy="6.5" r="5.3" fill="#e4f1fd" stroke="#4a8ad4" stroke-width="1.4"/><path d="M3.5 6.5 H9.5" stroke="#6a9ad8" stroke-width="1.6"/><path d="M10.5 10.5 L15 15" stroke="#e0a030" stroke-width="2.4" stroke-linecap="round"/></svg>
<div class="b" style="left:659px;top:55px;width:1px;height:20px;background:#a0a0a0;"></div>
<svg style="left:668px;top:57px" width="16" height="17" viewBox="0 0 16 17" ><path d="M3.5 2.5 V16 M1 13.5 H14.8" stroke="#505050" fill="none"/><path d="M2 4.5 L3.5 2.5 L5 4.5 M13 12 L15 13.5 L13 15" stroke="#505050" fill="none" stroke-width="0.9"/><polygon points="7.5,4.7 12.4,7.6 7.5,10.5" fill="#3fd03f" stroke="#0a8a0a" stroke-width="0.8"/></svg>
<div class="b" style="left:691px;top:53px;width:26px;height:23px;background:#f8f8f8;border:1px solid #c8c8c8;border-right-color:#fff;border-bottom-color:#fff;box-sizing:border-box;background-image:repeating-conic-gradient(#ffffff 0% 25%, #efefef 0% 50%);background-size:2px 2px;"></div>
<svg style="left:696px;top:57px" width="16" height="17" viewBox="0 0 16 17" ><path d="M3.5 2.5 V16 M1 13.5 H14.8" stroke="#505050" fill="none"/><path d="M2 4.5 L3.5 2.5 L5 4.5 M13 12 L15 13.5 L13 15" stroke="#505050" fill="none" stroke-width="0.9"/><path d="M9.5 2 V12" stroke="#2a68c0" stroke-width="1.2"/><path d="M15 7 H11.5 M13.5 4.8 L11 7 L13.5 9.2" stroke="#d04810" stroke-width="1.2" fill="none"/></svg>
<div class="b" style="left:720px;top:55px;width:1px;height:20px;background:#a0a0a0;"></div>
<svg style="left:730px;top:56px" width="17" height="19" viewBox="0 0 17 19" ><path d="M1.5 0.5 H8.5 L11.5 3.5 V11.5 H1.5 Z" fill="#ffffff" stroke="#707070"/><path d="M8.5 0.5 V3.5 H11.5" fill="none" stroke="#707070"/><path d="M3.5 3 V9 M2.5 4 H4.5 M2.5 8 H4.5" stroke="#503080" stroke-width="0.9"/><path d="M11.3 5.799999999999999 V16.6 M5.9 11.2 H16.700000000000003" stroke="#0a7a0a" stroke-width="4.6"/><path d="M11.3 6.599999999999999 V15.8 M6.7 11.2 H15.900000000000002" stroke="#2fd62f" stroke-width="2.8"/></svg>
<svg style="left:750px;top:64px" width="6" height="3" viewBox="0 0 6 3" ><polygon points="0,0 6,0 3,3" fill="#000"/></svg>
<svg style="left:766px;top:57px" width="16" height="16" viewBox="0 0 16 16" ><circle cx="8" cy="8" r="7.2" fill="#2a66c8" stroke="#1a4a9a" stroke-width="0.8"/><path d="M2 5 A7 7 0 0 1 14 5" stroke="#7fb0f0" stroke-width="1.2" fill="none"/><circle cx="8" cy="8" r="4.8" fill="#f4f8fe"/><path d="M8 4.8 V8.5 H10.8" stroke="#303030" stroke-width="1.1" fill="none"/></svg>
<svg style="left:787px;top:64px" width="6" height="3" viewBox="0 0 6 3" ><polygon points="0,0 6,0 3,3" fill="#000"/></svg>
<svg style="left:803px;top:57px" width="16" height="16" viewBox="0 0 16 16" ><rect x="0.5" y="1.5" width="15" height="13" rx="1" fill="#ffffff" stroke="#3f7fc6"/><rect x="1" y="2" width="14" height="2.5" fill="#5b95d8"/><path d="M2 7.5 L5 6.5 L7 7.5 L10 6 L14 6.5" stroke="#e03020" fill="none"/><path d="M1 9.5 H15" stroke="#a0b8d8" stroke-width="0.8"/><path d="M2 12.5 L5 11.5 L7 12.8 L10 11 L14 12" stroke="#20a020" fill="none"/></svg>
<svg style="left:824px;top:64px" width="6" height="3" viewBox="0 0 6 3" ><polygon points="0,0 6,0 3,3" fill="#000"/></svg>
<div class="b" style="left:835px;top:53px;width:1px;height:24px;background:#a0a0a0;"></div>
<div class="b" style="left:836px;top:53px;width:1px;height:24px;background:#ffffff;"></div>
<div class="b" style="left:838px;top:53px;width:1px;height:24px;background:#fff;"></div>
<div class="b" style="left:839px;top:55px;width:3px;height:1px;background:#a6a6a6;"></div>
<div class="b" style="left:839px;top:57px;width:3px;height:1px;background:#a6a6a6;"></div>
<div class="b" style="left:839px;top:59px;width:3px;height:1px;background:#a6a6a6;"></div>
<div class="b" style="left:839px;top:61px;width:3px;height:1px;background:#a6a6a6;"></div>
<div class="b" style="left:839px;top:63px;width:3px;height:1px;background:#a6a6a6;"></div>
<div class="b" style="left:839px;top:65px;width:3px;height:1px;background:#a6a6a6;"></div>
<div class="b" style="left:839px;top:67px;width:3px;height:1px;background:#a6a6a6;"></div>
<div class="b" style="left:839px;top:69px;width:3px;height:1px;background:#a6a6a6;"></div>
<div class="b" style="left:839px;top:71px;width:3px;height:1px;background:#a6a6a6;"></div>
<div class="b" style="left:839px;top:73px;width:3px;height:1px;background:#a6a6a6;"></div>
<div class="b" style="left:873px;top:53px;width:26px;height:23px;background:#f8f8f8;border:1px solid #c8c8c8;border-right-color:#fff;border-bottom-color:#fff;box-sizing:border-box;background-image:repeating-conic-gradient(#ffffff 0% 25%, #efefef 0% 50%);background-size:2px 2px;"></div>
<span class="t" style="left:850.40px;top:61.00px;font-size:10px;line-height:10px;color:#303030;letter-spacing:-0.692px;">M1</span>
<span class="t" style="left:878.50px;top:61.00px;font-size:10px;line-height:10px;color:#303030;letter-spacing:-0.692px;">M5</span>
<span class="t" style="left:904.60px;top:61.00px;font-size:10px;line-height:10px;color:#303030;letter-spacing:-0.512px;transform:scaleX(0.950);transform-origin:0 0;">M15</span>
<span class="t" style="left:932.40px;top:61.00px;font-size:10px;line-height:10px;color:#303030;letter-spacing:-0.504px;transform:scaleX(0.965);transform-origin:0 0;">M30</span>
<span class="t" style="left:963.80px;top:61.00px;font-size:10px;line-height:10px;color:#303030;letter-spacing:-0.583px;">H1</span>
<span class="t" style="left:990.90px;top:61.00px;font-size:10px;line-height:10px;color:#303030;letter-spacing:-0.583px;">H4</span>
<span class="t" style="left:1019.70px;top:61.00px;font-size:10px;line-height:10px;color:#303030;letter-spacing:-0.883px;">D1</span>
<span class="t" style="left:1047.10px;top:61.00px;font-size:10px;line-height:10px;color:#303030;letter-spacing:-0.768px;transform:scaleX(0.977);transform-origin:0 0;">W1</span>
<span class="t" style="left:1073.60px;top:61.00px;font-size:10px;line-height:10px;color:#303030;letter-spacing:-0.752px;">MN</span>
<div class="b" style="left:1096px;top:52px;width:1px;height:26px;background:#a0a0a0;"></div>
<div class="b" style="left:1097px;top:52px;width:1px;height:26px;background:#ffffff;"></div>
<div class="b" style="left:1900px;top:52px;width:26px;height:24px;background:#ececec;border:1px solid #b0b0b0;box-sizing:border-box;background:linear-gradient(#f6f6f6 0%,#ededed 49%,#dadada 51%,#d6d6d6 100%);"></div>
<svg style="left:1905px;top:57px" width="16" height="17" viewBox="0 0 16 17" ><path d="M1.5 0 H14.5 Q16 0 16 1.5 V10.5 Q16 12 14.5 12 H7.5 L6.5 16 L3.5 12 H1.5 Q0 12 0 10.5 V1.5 Q0 0 1.5 0 Z" fill="#6a82b6"/></svg>
<span class="t" style="left:1910.00px;top:58.00px;font-size:11px;line-height:11px;color:#fff;">4</span>
<div class="b" style="left:20px;top:80px;width:1px;height:24px;background:#a0a0a0;"></div>
<div class="b" style="left:21px;top:80px;width:1px;height:24px;background:#fff;"></div>
<div class="b" style="left:24px;top:82px;width:3px;height:1px;background:#a6a6a6;"></div>
<div class="b" style="left:24px;top:84px;width:3px;height:1px;background:#a6a6a6;"></div>
<div class="b" style="left:24px;top:86px;width:3px;height:1px;background:#a6a6a6;"></div>
<div class="b" style="left:24px;top:88px;width:3px;height:1px;background:#a6a6a6;"></div>
<div class="b" style="left:24px;top:90px;width:3px;height:1px;background:#a6a6a6;"></div>
<div class="b" style="left:24px;top:92px;width:3px;height:1px;background:#a6a6a6;"></div>
<div class="b" style="left:24px;top:94px;width:3px;height:1px;background:#a6a6a6;"></div>
<div class="b" style="left:24px;top:96px;width:3px;height:1px;background:#a6a6a6;"></div>
<div class="b" style="left:24px;top:98px;width:3px;height:1px;background:#a6a6a6;"></div>
<div class="b" style="left:24px;top:100px;width:3px;height:1px;background:#a6a6a6;"></div>
<div class="b" style="left:30px;top:80px;width:26px;height:23px;background:#f8f8f8;border:1px solid #c8c8c8;border-right-color:#fff;border-bottom-color:#fff;box-sizing:border-box;background-image:repeating-conic-gradient(#ffffff 0% 25%, #efefef 0% 50%);background-size:2px 2px;"></div>
<svg style="left:35px;top:84px" width="12" height="16" viewBox="0 0 12 16" ><path d="M2 1 V13 L5 10.2 L7.4 15 L9.4 14 L7 9.4 L11 9.2 Z" fill="#404040"/></svg>
<svg style="left:63px;top:85px" width="16" height="16" viewBox="0 0 16 16" ><path d="M7.5 0 V6 M7.5 9 V15 M0 7.5 H6 M9 7.5 H15" stroke="#404040" stroke-width="1.1"/><rect x="7" y="7" width="1" height="1" fill="#c03030"/></svg>
<div class="b" style="left:87px;top:81px;width:1px;height:21px;background:#a0a0a0;"></div>
<svg style="left:100px;top:85px" width="10" height="15" viewBox="0 0 10 15" ><path d="M4.5 1 V14" stroke="#484848" stroke-width="1" shape-rendering="crispEdges"/></svg>
<svg style="left:126px;top:85px" width="14" height="15" viewBox="0 0 14 15" ><path d="M1 7.5 H13" stroke="#484848" stroke-width="1" shape-rendering="crispEdges"/></svg>
<svg style="left:153px;top:84px" width="16" height="16" viewBox="0 0 16 16" ><path d="M1.5 14 L14.5 2" stroke="#505050" stroke-width="1"/></svg>
<svg style="left:180px;top:83px" width="18" height="18" viewBox="0 0 18 18" ><path d="M0.5 11 L13.5 3 M1.5 14 L14.5 6 M2.5 17 L15.5 9 M5 6 L3 16.5 M8.5 4 L6.5 14.5 M12 1.5 L10 12.5" stroke="#505050" stroke-width="0.9" fill="none"/><path d="M13 12.5 H16.5 M13 12.5 V17 H16.5 M13 14.7 H16" stroke="#202020" stroke-width="1.1" fill="none"/></svg>
<svg style="left:209px;top:84px" width="18" height="18" viewBox="0 0 18 18" ><path d="M1 2.5 H14 M1 6.5 H14 M1 10.5 H14 M1 13.5 H10" stroke="#404040" stroke-width="1" stroke-dasharray="1 1"/><path d="M12.5 17 V12.5 H16 M12.5 14.7 H15.5" stroke="#202020" stroke-width="1.1" fill="none"/></svg>
<svg style="left:240px;top:87px" width="9" height="11" viewBox="0 0 9 11" ><path d="M0.7 10 L4 1 H4.6 L7.9 10 M2 7 H6.6" stroke="#484848" stroke-width="1.3" fill="none"/></svg>
<svg style="left:265px;top:84px" width="16" height="16" viewBox="0 0 16 16" ><rect x="1.5" y="1.5" width="12" height="13" fill="none" stroke="#505050" stroke-dasharray="1 1" shape-rendering="crispEdges"/><rect x="0" y="0" width="3" height="2" fill="#505050"/><path d="M4 4.7 H11 M7.5 4.7 V12.5" stroke="#404040" stroke-width="1.6"/></svg>
<svg style="left:293px;top:83px" width="17" height="18" viewBox="0 0 17 18" ><path d="M4 1 L7.5 4.5 L4 7.5 L0.5 4.5 Z M12.5 17 L9 13.5 L12.5 10.5 L16 13.5 Z" fill="#404040"/><path d="M3.5 9 L6.5 12.5 L11.5 5.5" stroke="#404040" stroke-width="1.5" fill="none"/></svg>
<svg style="left:312px;top:91px" width="6" height="3" viewBox="0 0 6 3" ><polygon points="0,0 6,0 3,3" fill="#000"/></svg>
<div class="b" style="left:324px;top:80px;width:1px;height:24px;background:#a0a0a0;"></div>
<div class="b" style="left:325px;top:80px;width:1px;height:24px;background:#ffffff;"></div>
<div class="b" style="left:9px;top:915px;width:1px;height:17px;background:#696969;"></div>
<div class="b" style="left:10px;top:915px;width:1px;height:17px;background:#696969;"></div>
<div class="b" style="left:8px;top:913px;width:1920px;height:1px;background:#000;"></div>
<div class="b" style="left:161px;top:911px;width:70px;height:20px;background:#fff;"></div>
<div class="b" style="left:160px;top:913px;width:1px;height:19px;background:#000;"></div>
<div class="b" style="left:231px;top:913px;width:1px;height:19px;background:#000;"></div>
<div class="b" style="left:160px;top:931px;width:72px;height:1px;background:#000;"></div>
<div class="b" style="left:162px;top:932px;width:71px;height:1px;background:#9a9a9a;"></div>
<div class="b" style="left:232px;top:915px;width:1px;height:18px;background:#9a9a9a;"></div>
<span class="t" style="left:23.30px;top:917.00px;font-size:11px;line-height:11px;color:#777777;letter-spacing:-0.376px;">DAX30,M15</span>
<span class="t" style="left:102.70px;top:917.00px;font-size:11px;line-height:11px;color:#777777;letter-spacing:-0.382px;">WS30,M5</span>
<span class="t" style="left:170.20px;top:917.00px;font-size:11px;line-height:11px;color:#000;letter-spacing:-0.400px;transform:scaleX(0.971);transform-origin:0 0;">BRENT,M5</span>
<span class="t" style="left:243.00px;top:917.00px;font-size:11px;line-height:11px;color:#777777;letter-spacing:-0.412px;transform:scaleX(0.957);transform-origin:0 0;">EURUSD,M30</span>
<span class="t" style="left:330.80px;top:917.00px;font-size:11px;line-height:11px;color:#777777;letter-spacing:-0.407px;transform:scaleX(0.968);transform-origin:0 0;">EURUSD,M15</span>
<span class="t" style="left:418.30px;top:917.00px;font-size:11px;line-height:11px;color:#777777;letter-spacing:-0.405px;transform:scaleX(0.972);transform-origin:0 0;">AUDUSD,M15</span>
<span class="t" style="left:506.90px;top:917.00px;font-size:11px;line-height:11px;color:#777777;letter-spacing:-0.412px;transform:scaleX(0.957);transform-origin:0 0;">EURUSD,M30</span>
<span class="t" style="left:592.90px;top:917.00px;font-size:11px;line-height:11px;color:#777777;letter-spacing:-0.406px;transform:scaleX(0.979);transform-origin:0 0;">GOLD,M15</span>
<span class="t" style="left:666.00px;top:917.00px;font-size:11px;line-height:11px;color:#777777;letter-spacing:-0.379px;transform:scaleX(0.974);transform-origin:0 0;">USDJPY,H1</span>
<span class="t" style="left:743.00px;top:917.00px;font-size:11px;line-height:11px;color:#777777;letter-spacing:-0.411px;transform:scaleX(0.958);transform-origin:0 0;">EURUSD,M15</span>
<span class="t" style="left:830.90px;top:917.00px;font-size:11px;line-height:11px;color:#777777;letter-spacing:-0.412px;transform:scaleX(0.957);transform-origin:0 0;">EURUSD,M30</span>
<span class="t" style="left:918.00px;top:917.00px;font-size:11px;line-height:11px;color:#777777;letter-spacing:-0.387px;transform:scaleX(0.955);transform-origin:0 0;">GBPJPY,H1</span>
<span class="t" style="left:995.00px;top:917.00px;font-size:11px;line-height:11px;color:#777777;letter-spacing:-0.411px;transform:scaleX(0.958);transform-origin:0 0;">EURUSD,M15</span>
<span class="t" style="left:1083.20px;top:917.00px;font-size:11px;line-height:11px;color:#777777;letter-spacing:-0.136px;">WTI,M30</span>
<span class="t" style="left:1149.00px;top:917.00px;font-size:11px;line-height:11px;color:#777777;letter-spacing:-0.341px;transform:scaleX(0.970);transform-origin:0 0;">EURZAR,Daily</span>
<span class="t" style="left:1239.00px;top:917.00px;font-size:11px;line-height:11px;color:#777777;letter-spacing:-0.467px;">SP500,M1</span>
<span class="t" style="left:1309.80px;top:917.00px;font-size:11px;line-height:11px;color:#777777;letter-spacing:-0.377px;transform:scaleX(0.973);transform-origin:0 0;">ESX50,M30</span>
<span class="t" style="left:1386.70px;top:917.00px;font-size:11px;line-height:11px;color:#777777;letter-spacing:-0.411px;transform:scaleX(0.958);transform-origin:0 0;">EURUSD,M30</span>
<span class="t" style="left:1473.80px;top:917.00px;font-size:11px;line-height:11px;color:#777777;letter-spacing:0.301px;">FIT,H4</span>
<span class="t" style="left:1530.00px;top:917.00px;font-size:11px;line-height:11px;color:#777777;letter-spacing:-0.334px;transform:scaleX(0.975);transform-origin:0 0;">GOLD,Daily</span>
<span class="t" style="left:1606.00px;top:917.00px;font-size:11px;line-height:11px;color:#777777;letter-spacing:-0.544px;">EURCHF,M1</span>
<span class="t" style="left:1686.60px;top:917.00px;font-size:11px;line-height:11px;color:#777777;letter-spacing:-0.411px;transform:scaleX(0.958);transform-origin:0 0;">EURUSD,M30</span>
<span class="t" style="left:1773.00px;top:917.00px;font-size:11px;line-height:11px;color:#777777;letter-spacing:-0.410px;transform:scaleX(0.970);transform-origin:0 0;">GOLD,M30</span>
<div class="b" style="left:92px;top:916px;width:1px;height:13px;background:#696969;"></div>
<div class="b" style="left:320px;top:916px;width:1px;height:13px;background:#696969;"></div>
<div class="b" style="left:408px;top:916px;width:1px;height:13px;background:#696969;"></div>
<div class="b" style="left:496px;top:916px;width:1px;height:13px;background:#696969;"></div>
<div class="b" style="left:584px;top:916px;width:1px;height:13px;background:#696969;"></div>
<div class="b" style="left:656px;top:916px;width:1px;height:13px;background:#696969;"></div>
<div class="b" style="left:732px;top:916px;width:1px;height:13px;background:#696969;"></div>
<div class="b" style="left:820px;top:916px;width:1px;height:13px;background:#696969;"></div>
<div class="b" style="left:908px;top:916px;width:1px;height:13px;background:#696969;"></div>
<div class="b" style="left:984px;top:916px;width:1px;height:13px;background:#696969;"></div>
<div class="b" style="left:1072px;top:916px;width:1px;height:13px;background:#696969;"></div>
<div class="b" style="left:1140px;top:916px;width:1px;height:13px;background:#696969;"></div>
<div class="b" style="left:1228px;top:916px;width:1px;height:13px;background:#696969;"></div>
<div class="b" style="left:1300px;top:916px;width:1px;height:13px;background:#696969;"></div>
<div class="b" style="left:1376px;top:916px;width:1px;height:13px;background:#696969;"></div>
<div class="b" style="left:1464px;top:916px;width:1px;height:13px;background:#696969;"></div>
<div class="b" style="left:1520px;top:916px;width:1px;height:13px;background:#696969;"></div>
<div class="b" style="left:1596px;top:916px;width:1px;height:13px;background:#696969;"></div>
<div class="b" style="left:1676px;top:916px;width:1px;height:13px;background:#696969;"></div>
<div class="b" style="left:1763px;top:916px;width:1px;height:13px;background:#696969;"></div>
<div class="b" style="left:1836px;top:916px;width:1px;height:13px;background:#696969;"></div>
<svg style="left:1899px;top:920px" width="4" height="7" viewBox="0 0 4 7" ><polygon points="4,0 4,7 0,3.5" fill="#000"/></svg>
<svg style="left:1917px;top:920px" width="4" height="7" viewBox="0 0 4 7" ><polygon points="0,0 0,7 4,3.5" fill="#909090"/></svg>
<div class="b" style="left:8px;top:933px;width:1920px;height:1px;background:#ffffff;"></div>
<svg style="left:12px;top:940px" width="7" height="6" viewBox="0 0 7 6" ><path d="M0.8 0.5 L6.2 5.5 M6.2 0.5 L0.8 5.5" stroke="#000" stroke-width="1.6"/></svg>
<div class="b" style="left:9px;top:951px;width:13px;height:73px;background:#a9c6e8;"></div>
<span class="t" style="left:9px;top:1021px;width:50px;height:13px;font-size:11px;line-height:13px;color:#101828;letter-spacing:0.18px;transform-origin:0 0;transform:rotate(-90deg);">Terminale</span>
<div class="b" style="left:23px;top:937px;width:1902px;height:1px;background:#a0a0a0;"></div>
<div class="b" style="left:23px;top:937px;width:1px;height:87px;background:#a0a0a0;"></div>
<div class="b" style="left:24px;top:938px;width:1883px;height:23px;background:#fff;background:linear-gradient(#ffffff 0%,#ffffff 42%,#f2f4f7 50%,#eef0f4 100%);"></div>
<div class="b" style="left:24px;top:960px;width:1883px;height:1px;background:#d5d5d5;"></div>
<div class="b" style="left:24px;top:961px;width:1883px;height:1px;background:#e8e8e8;"></div>
<div class="b" style="left:24px;top:962px;width:1869px;height:21px;background:#fff;"></div>
<div class="b" style="left:24px;top:982px;width:1883px;height:1px;background:#dcdcdc;"></div>
<div class="b" style="left:24px;top:983px;width:1869px;height:20px;background:#ececec;"></div>
<div class="b" style="left:1893px;top:962px;width:14px;height:41px;background:#fff;"></div>
<div class="b" style="left:23px;top:1003px;width:1901px;height:1px;background:#000;"></div>
<div class="b" style="left:176px;top:939px;width:1px;height:21px;background:#e0e0e0;"></div>
<div class="b" style="left:177px;top:939px;width:1px;height:21px;background:#ffffff;"></div>
<div class="b" style="left:175px;top:962px;width:1px;height:41px;background:#d8d8d8;"></div>
<div class="b" style="left:435px;top:939px;width:1px;height:21px;background:#e0e0e0;"></div>
<div class="b" style="left:436px;top:939px;width:1px;height:21px;background:#ffffff;"></div>
<div class="b" style="left:434px;top:962px;width:1px;height:41px;background:#d8d8d8;"></div>
<div class="b" style="left:541px;top:939px;width:1px;height:21px;background:#e0e0e0;"></div>
<div class="b" style="left:542px;top:939px;width:1px;height:21px;background:#ffffff;"></div>
<div class="b" style="left:540px;top:962px;width:1px;height:41px;background:#d8d8d8;"></div>
<div class="b" style="left:623px;top:939px;width:1px;height:21px;background:#e0e0e0;"></div>
<div class="b" style="left:624px;top:939px;width:1px;height:21px;background:#ffffff;"></div>
<div class="b" style="left:622px;top:962px;width:1px;height:41px;background:#d8d8d8;"></div>
<div class="b" style="left:729px;top:939px;width:1px;height:21px;background:#e0e0e0;"></div>
<div class="b" style="left:730px;top:939px;width:1px;height:21px;background:#ffffff;"></div>
<div class="b" style="left:728px;top:962px;width:1px;height:41px;background:#d8d8d8;"></div>
<div class="b" style="left:847px;top:939px;width:1px;height:21px;background:#e0e0e0;"></div>
<div class="b" style="left:848px;top:939px;width:1px;height:21px;background:#ffffff;"></div>
<div class="b" style="left:846px;top:962px;width:1px;height:41px;background:#d8d8d8;"></div>
<div class="b" style="left:965px;top:939px;width:1px;height:21px;background:#e0e0e0;"></div>
<div class="b" style="left:966px;top:939px;width:1px;height:21px;background:#ffffff;"></div>
<div class="b" style="left:964px;top:962px;width:1px;height:41px;background:#d8d8d8;"></div>
<div class="b" style="left:1083px;top:939px;width:1px;height:21px;background:#e0e0e0;"></div>
<div class="b" style="left:1084px;top:939px;width:1px;height:21px;background:#ffffff;"></div>
<div class="b" style="left:1082px;top:962px;width:1px;height:41px;background:#d8d8d8;"></div>
<div class="b" style="left:1201px;top:939px;width:1px;height:21px;background:#e0e0e0;"></div>
<div class="b" style="left:1202px;top:939px;width:1px;height:21px;background:#ffffff;"></div>
<div class="b" style="left:1200px;top:962px;width:1px;height:41px;background:#d8d8d8;"></div>
<div class="b" style="left:1288px;top:939px;width:1px;height:21px;background:#e0e0e0;"></div>
<div class="b" style="left:1289px;top:939px;width:1px;height:21px;background:#ffffff;"></div>
<div class="b" style="left:1287px;top:962px;width:1px;height:41px;background:#d8d8d8;"></div>
<div class="b" style="left:1406px;top:939px;width:1px;height:21px;background:#e0e0e0;"></div>
<div class="b" style="left:1407px;top:939px;width:1px;height:21px;background:#ffffff;"></div>
<div class="b" style="left:1405px;top:962px;width:1px;height:41px;background:#d8d8d8;"></div>
<div class="b" style="left:1535px;top:939px;width:1px;height:21px;background:#e0e0e0;"></div>
<div class="b" style="left:1536px;top:939px;width:1px;height:21px;background:#ffffff;"></div>
<div class="b" style="left:1534px;top:962px;width:1px;height:41px;background:#d8d8d8;"></div>
<div class="b" style="left:1893px;top:939px;width:1px;height:21px;background:#e0e0e0;"></div>
<div class="b" style="left:1894px;top:939px;width:1px;height:21px;background:#ffffff;"></div>
<div class="b" style="left:1892px;top:962px;width:1px;height:41px;background:#d8d8d8;"></div>
<span class="t" style="left:30.50px;top:945.00px;font-size:11px;line-height:11px;color:#000;letter-spacing:0.416px;">Ordine</span>
<span class="t" style="left:349.60px;top:945.00px;font-size:11px;line-height:11px;color:#000;letter-spacing:0.284px;">Data/Orario</span>
<span class="t" style="left:514.10px;top:945.00px;font-size:11px;line-height:11px;color:#000;letter-spacing:-0.031px;">Tipo</span>
<span class="t" style="left:595.40px;top:945.00px;font-size:11px;line-height:11px;color:#000;letter-spacing:0.327px;">Lotti</span>
<span class="t" style="left:682.30px;top:945.00px;font-size:11px;line-height:11px;color:#000;letter-spacing:0.309px;">Simbolo</span>
<span class="t" style="left:809.20px;top:945.00px;font-size:11px;line-height:11px;color:#000;letter-spacing:-0.407px;">Prezzo</span>
<span class="t" style="left:911.10px;top:945.00px;font-size:11px;line-height:11px;color:#000;letter-spacing:-0.053px;">Stop Loss</span>
<span class="t" style="left:1022.50px;top:945.00px;font-size:11px;line-height:11px;color:#000;letter-spacing:0.455px;">Take profit</span>
<span class="t" style="left:1163.10px;top:945.00px;font-size:11px;line-height:11px;color:#000;letter-spacing:-0.407px;">Prezzo</span>
<span class="t" style="left:1215.60px;top:945.00px;font-size:11px;line-height:11px;color:#000;letter-spacing:0.057px;">Commissione</span>
<span class="t" style="left:1373.20px;top:945.00px;font-size:11px;line-height:11px;color:#000;letter-spacing:-0.039px;">Swap</span>
<span class="t" style="left:1491.10px;top:945.00px;font-size:11px;line-height:11px;color:#000;letter-spacing:0.536px;">Profitto</span>
<span class="t" style="left:1831.70px;top:945.00px;font-size:11px;line-height:11px;color:#000;letter-spacing:0.157px;">Commento</span>
<svg style="left:421px;top:947px" width="8" height="7" viewBox="0 0 8 7" ><path d="M0.5 0.5 H7.5 L4 6 Z" fill="none" stroke="#707070" stroke-width="0.9"/></svg>
<span class="t" style="left:48.70px;top:967.00px;font-size:11px;line-height:11px;color:#000;letter-spacing:-0.205px;">4104334</span>
<span class="t" style="left:348.20px;top:967.00px;font-size:11px;line-height:11px;color:#000;letter-spacing:-0.170px;">2012.08.09 18:47</span>
<span class="t" style="left:519.50px;top:967.00px;font-size:11px;line-height:11px;color:#000;letter-spacing:0.382px;">buy</span>
<span class="t" style="left:598.30px;top:967.00px;font-size:11px;line-height:11px;color:#000;letter-spacing:-0.137px;">1.20</span>
<span class="t" style="left:709.80px;top:967.00px;font-size:11px;line-height:11px;color:#000;letter-spacing:1.227px;">wti</span>
<span class="t" style="left:816.10px;top:967.00px;font-size:11px;line-height:11px;color:#000;letter-spacing:-0.032px;">93.65</span>
<span class="t" style="left:940.40px;top:967.00px;font-size:11px;line-height:11px;color:#000;letter-spacing:-0.137px;">0.00</span>
<span class="t" style="left:1058.60px;top:967.00px;font-size:11px;line-height:11px;color:#000;letter-spacing:-0.137px;">0.00</span>
<span class="t" style="left:1169.70px;top:967.00px;font-size:11px;line-height:11px;color:#000;letter-spacing:-0.032px;">93.70</span>
<span class="t" style="left:1263.20px;top:967.00px;font-size:11px;line-height:11px;color:#000;letter-spacing:-0.137px;">0.00</span>
<span class="t" style="left:1381.70px;top:967.00px;font-size:11px;line-height:11px;color:#000;letter-spacing:-0.270px;">0.00</span>
<span class="t" style="left:1510.80px;top:967.00px;font-size:11px;line-height:11px;color:#000;letter-spacing:-0.270px;">4.89</span>
<span class="t" style="left:1820.50px;top:967.00px;font-size:11px;line-height:11px;color:#000;letter-spacing:0.172px;">spread oil m5</span>
<span class="t" style="left:48.70px;top:987.00px;font-size:11px;line-height:11px;color:#000;letter-spacing:-0.205px;">4104333</span>
<span class="t" style="left:348.20px;top:987.00px;font-size:11px;line-height:11px;color:#000;letter-spacing:-0.170px;">2012.08.09 18:47</span>
<span class="t" style="left:521.30px;top:987.00px;font-size:11px;line-height:11px;color:#000;letter-spacing:0.064px;">sell</span>
<span class="t" style="left:598.30px;top:987.00px;font-size:11px;line-height:11px;color:#000;letter-spacing:-0.137px;">1.00</span>
<span class="t" style="left:698.60px;top:987.00px;font-size:11px;line-height:11px;color:#000;letter-spacing:0.506px;">brent</span>
<span class="t" style="left:810.60px;top:987.00px;font-size:11px;line-height:11px;color:#000;letter-spacing:0.014px;">112.69</span>
<span class="t" style="left:940.40px;top:987.00px;font-size:11px;line-height:11px;color:#000;letter-spacing:-0.137px;">0.00</span>
<span class="t" style="left:1058.60px;top:987.00px;font-size:11px;line-height:11px;color:#000;letter-spacing:-0.137px;">0.00</span>
<span class="t" style="left:1164.60px;top:987.00px;font-size:11px;line-height:11px;color:#000;letter-spacing:-0.066px;">112.81</span>
<span class="t" style="left:1263.20px;top:987.00px;font-size:11px;line-height:11px;color:#000;letter-spacing:-0.137px;">0.00</span>
<span class="t" style="left:1381.70px;top:987.00px;font-size:11px;line-height:11px;color:#000;letter-spacing:-0.270px;">0.00</span>
<span class="t" style="left:1507.70px;top:987.00px;font-size:11px;line-height:11px;color:#000;letter-spacing:-0.344px;">-9.77</span>
<span class="t" style="left:1820.50px;top:987.00px;font-size:11px;line-height:11px;color:#000;letter-spacing:0.172px;">spread oil m5</span>
<svg style="left:27px;top:965px" width="15" height="15" viewBox="0 0 15 15" ><path d="M0.5 1.5 Q0.5 0.5 1.5 0.5 H8 L11.5 4 V12.5 Q11.5 13.5 10.5 13.5 H1.5 Q0.5 13.5 0.5 12.5 Z" fill="#fdfdfd" stroke="#6a6a6a"/><path d="M8 0.5 V4 H11.5" fill="none" stroke="#6a6a6a" stroke-width="0.8"/><circle cx="10.6" cy="11.2" r="3.3" fill="#2f8fe8" stroke="#1a5fb0" stroke-width="0.8"/><circle cx="9.8" cy="10.2" r="1.2" fill="#fff" fill-opacity="0.45"/></svg>
<svg style="left:27px;top:985px" width="15" height="15" viewBox="0 0 15 15" ><path d="M0.5 1.5 Q0.5 0.5 1.5 0.5 H8 L11.5 4 V12.5 Q11.5 13.5 10.5 13.5 H1.5 Q0.5 13.5 0.5 12.5 Z" fill="#fdfdfd" stroke="#6a6a6a"/><path d="M8 0.5 V4 H11.5" fill="none" stroke="#6a6a6a" stroke-width="0.8"/><circle cx="10.6" cy="11.2" r="3.3" fill="#d8701a" stroke="#9c4a08" stroke-width="0.8"/><circle cx="9.8" cy="10.2" r="1.2" fill="#fff" fill-opacity="0.45"/></svg>
<div class="b" style="left:1908px;top:938px;width:16px;height:65px;background:#f0f0f0;background:linear-gradient(90deg,#ffffff,#f0f0f0);"></div>
<svg style="left:1913px;top:945px" width="7" height="4" viewBox="0 0 7 4" ><polygon points="0,4 7,4 3.5,0" fill="#505050"/></svg>
<div class="b" style="left:1908px;top:956px;width:15px;height:15px;background:#e4e4e4;border:1px solid #9a9a9a;box-sizing:border-box;border-radius:2px;background:linear-gradient(90deg,#f4f4f4,#d8d8d8);"></div>
<svg style="left:1913px;top:993px" width="7" height="4" viewBox="0 0 7 4" ><polygon points="0,0 7,0 3.5,4" fill="#404040"/></svg>
<div class="b" style="left:26px;top:1003px;width:95px;height:18px;background:#fff;border:1px solid #000;border-top:none;box-sizing:border-box;"></div>
<div class="b" style="left:27px;top:1021px;width:95px;height:1px;background:#808080;"></div>
<div class="b" style="left:121px;top:1004px;width:1px;height:18px;background:#808080;"></div>
<span class="t" style="left:35.40px;top:1007.00px;font-size:11px;line-height:11px;color:#000;letter-spacing:-0.232px;">Posizioni aperte</span>
<span class="t" style="left:130.10px;top:1008.00px;font-size:11px;line-height:11px;color:#777777;letter-spacing:-0.174px;">Storico operazioni</span>
<span class="t" style="left:235.80px;top:1008.00px;font-size:11px;line-height:11px;color:#777777;letter-spacing:-0.291px;transform:scaleX(0.963);transform-origin:0 0;">Allarmi</span>
<span class="t" style="left:286.00px;top:1008.00px;font-size:11px;line-height:11px;color:#777777;letter-spacing:-0.194px;">Casella postale</span>
<span class="t" style="left:378.50px;top:1008.00px;font-size:11px;line-height:11px;color:#777777;letter-spacing:-0.286px;">Consiglieri</span>
<span class="t" style="left:446.00px;top:1008.00px;font-size:11px;line-height:11px;color:#777777;letter-spacing:-0.246px;">Diario</span>
<div class="b" style="left:226px;top:1007px;width:1px;height:12px;background:#696969;"></div>
<div class="b" style="left:277px;top:1007px;width:1px;height:12px;background:#696969;"></div>
<div class="b" style="left:369px;top:1007px;width:1px;height:12px;background:#696969;"></div>
<div class="b" style="left:437px;top:1007px;width:1px;height:12px;background:#696969;"></div>
<div class="b" style="left:484px;top:1007px;width:1px;height:12px;background:#696969;"></div>
<div class="b" style="left:8px;top:1024px;width:1920px;height:1px;background:#fbfbfb;"></div>
<div class="b" style="left:8px;top:1025px;width:1920px;height:1px;background:#fbfbfb;"></div>
<div class="b" style="left:8px;top:1026px;width:1920px;height:1px;background:#a0a0a0;"></div>
<div class="b" style="left:8px;top:1027px;width:1920px;height:1px;background:#ffffff;"></div>
<span class="t" style="left:10.30px;top:1034.00px;font-size:11px;line-height:11px;color:#000;letter-spacing:0.064px;">Per aiuto, premi F1</span>
<span class="t" style="left:1208.30px;top:1034.00px;font-size:11px;line-height:11px;color:#000;letter-spacing:0.407px;">Default</span>
<div class="b" style="left:1202px;top:1031px;width:1px;height:17px;background:#a0a0a0;"></div>
<div class="b" style="left:1318px;top:1031px;width:1px;height:17px;background:#a0a0a0;"></div>
<div class="b" style="left:1420px;top:1031px;width:1px;height:17px;background:#a0a0a0;"></div>
<div class="b" style="left:1491px;top:1031px;width:1px;height:17px;background:#a0a0a0;"></div>
<div class="b" style="left:1562px;top:1031px;width:1px;height:17px;background:#a0a0a0;"></div>
<div class="b" style="left:1630px;top:1031px;width:1px;height:17px;background:#a0a0a0;"></div>
<div class="b" style="left:1700px;top:1031px;width:1px;height:17px;background:#a0a0a0;"></div>
<div class="b" style="left:1766px;top:1031px;width:1px;height:17px;background:#a0a0a0;"></div>
<span class="t" style="left:1837.40px;top:1034.00px;font-size:11px;line-height:11px;color:#000;letter-spacing:0.110px;">2512/3 kb</span>
<svg style="left:1772px;top:1033px" width="24" height="12" viewBox="0 0 24 12" shape-rendering="crispEdges"><rect x="0" y="0" width="2" height="8" fill="#4f7a00"/><rect x="0" y="9" width="2" height="3" fill="#a01000"/><rect x="3" y="0" width="2" height="7" fill="#4f7a00"/><rect x="3" y="8" width="2" height="4" fill="#a01000"/><rect x="6" y="0" width="2" height="6" fill="#4f7a00"/><rect x="6" y="7" width="2" height="5" fill="#a01000"/><rect x="9" y="0" width="2" height="5" fill="#4f7a00"/><rect x="9" y="6" width="2" height="6" fill="#a01000"/><rect x="12" y="0" width="2" height="5" fill="#4f7a00"/><rect x="12" y="6" width="2" height="6" fill="#a01000"/><rect x="15" y="0" width="2" height="4" fill="#4f7a00"/><rect x="15" y="5" width="2" height="7" fill="#a01000"/><rect x="18" y="0" width="2" height="3" fill="#4f7a00"/><rect x="18" y="4" width="2" height="8" fill="#a01000"/><rect x="21" y="0" width="2" height="2" fill="#4f7a00"/><rect x="21" y="3" width="2" height="9" fill="#a01000"/></svg>
</body></html>
